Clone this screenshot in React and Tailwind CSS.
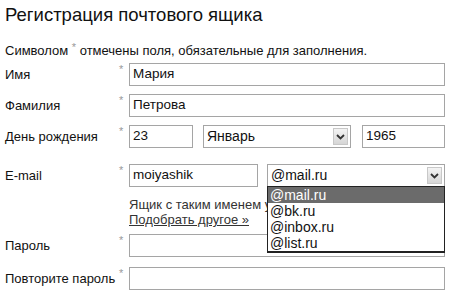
import React from 'react';

const Star = () => (
  <span className="w-[10px] self-start pt-[1px] text-[11px] leading-none text-[#9a9a9a]">*</span>
);

const Arrow = () => (
  <span className="absolute right-[2px] top-[2px] bottom-[2px] flex w-[15px] items-center justify-center border border-[#c8c8c8] bg-gradient-to-b from-[#f4f4f4] to-[#d6d6d6]">
    <svg width="9" height="6" viewBox="0 0 9 6">
      <path d="M1 1 L4.5 4.5 L8 1" fill="none" stroke="#333" strokeWidth="1.8" />
    </svg>
  </span>
);

const Input = ({ value, className = '' }) => (
  <div className={`flex h-[23px] items-center border border-[#a5a5a5] bg-white pl-[3px] text-[13.5px] text-[#111] ${className}`}>
    {value}
  </div>
);

const Select = ({ value, className = '', children }) => (
  <div className={`relative flex h-[23px] items-center border border-[#a5a5a5] bg-white pl-[3px] text-[14px] text-[#111] ${className}`}>
    {value}
    <Arrow />
    {children}
  </div>
);

const Row = ({ label, star = true, children, className = '' }) => (
  <div className={`flex items-center ${className}`}>
    <span className="w-[114px] text-[13px] text-[#111]">{label}</span>
    {star ? <Star /> : <span className="w-[10px]" />}
    {children}
  </div>
);

const domains = ['@mail.ru', '@bk.ru', '@inbox.ru', '@list.ru'];

export default function App() {
  return (
    <div className="h-[299px] w-[450px] overflow-hidden bg-white px-[5px] font-['Liberation_Sans',Arial,sans-serif]">
      <h1 className="pt-[4px] text-[18.5px] leading-[22px] text-[#111]">Регистрация почтового ящика</h1>
      <p className="mt-[17px] text-[13px] leading-[15px] text-[#111]">
        Символом <span className="relative -top-[4px] text-[11px] text-[#9a9a9a]">*</span> отмечены поля, обязательные для заполнения.
      </p>

      <Row label="Имя" className="mt-[4px]">
        <Input value="Мария" className="w-[316px]" />
      </Row>
      <Row label="Фамилия" className="mt-[8px]">
        <Input value="Петрова" className="w-[316px]" />
      </Row>
      <Row label="День рождения" className="mt-[8px]">
        <Input value="23" className="w-[64px]" />
        <Select value="Январь" className="ml-[10px] w-[148px]" />
        <Input value="1965" className="ml-[11px] w-[83px]" />
      </Row>
      <Row label="E-mail" className="mt-[16px]">
        <Input value="moiyashik" className="w-[129px]" />
        <Select value="@mail.ru" className="ml-[9px] w-[178px]">
          <div className="absolute left-[-1px] top-[21px] z-10 w-[178px] border border-b-2 border-[#222] bg-white">
            {domains.map((d, i) => (
              <div
                key={d}
                className={`h-[16px] pl-[2px] text-[14px] leading-[16px] ${i === 0 ? 'bg-[#6b6b6b] text-white' : 'text-[#111]'}`}
              >
                {d}
              </div>
            ))}
          </div>
        </Select>
      </Row>
      <div className="ml-[124px] mt-[10px] w-[138px] overflow-hidden whitespace-nowrap text-[13px] leading-[15px] text-[#333]">
        <div>Ящик с таким именем у</div>
        <a className="underline">Подобрать другое »</a>
      </div>
      <Row label="Пароль" className="mt-[7px]">
        <Input value="" className="w-[316px]" />
      </Row>
      <Row label="Повторите пароль" className="mt-[10px]">
        <Input value="" className="w-[316px]" />
      </Row>
    </div>
  );
}
